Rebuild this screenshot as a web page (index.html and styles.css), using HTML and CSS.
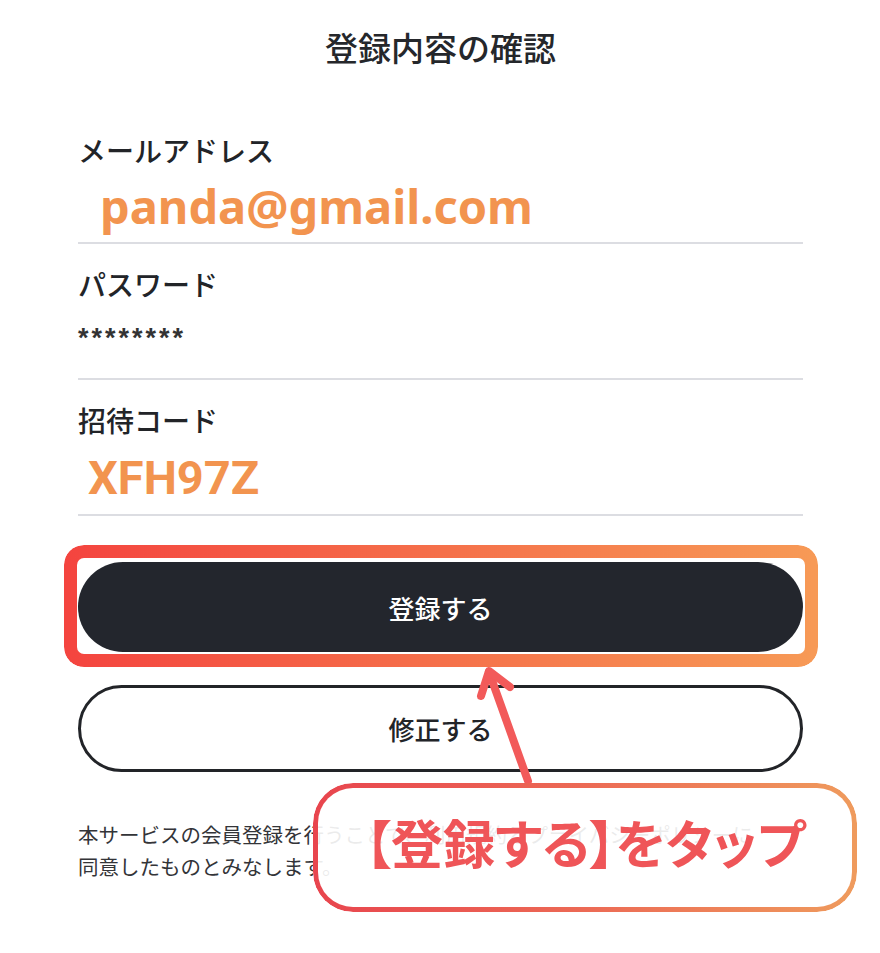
FILE: index.html
```html
<!DOCTYPE html>
<html lang="ja">
<head>
<meta charset="utf-8">
<title>登録内容の確認</title>
<link rel="stylesheet" href="styles.css">
</head>
<body>
<div class="screen">
  <h1 class="title">登録内容の確認</h1>
  <div class="fields">
    <div class="field">
      <div class="label">メールアドレス</div>
      <div class="value email">panda@gmail.com</div>
    </div>
    <div class="field">
      <div class="label">パスワード</div>
      <div class="value password">********</div>
    </div>
    <div class="field">
      <div class="label">招待コード</div>
      <div class="value code">XFH97Z</div>
    </div>
  </div>
  <div class="actions">
    <div class="primary-wrap">
      <button class="btn primary">登録する</button>
      <span class="highlight"></span>
    </div>
    <button class="btn secondary">修正する</button>
  </div>
  <p class="note">本サービスの会員登録を行うことで、利用規約とプライバシーポリシーに<br>同意したものとみなします。</p>
  <svg class="arrow" width="880" height="953" viewBox="0 0 880 953" aria-hidden="true">
    <g fill="none" stroke="#f25a5a" stroke-width="8" stroke-linecap="round" stroke-linejoin="round">
      <path d="M528 781 L489 672"/>
      <path d="M481 696 L489 671 L510 687"/>
    </g>
  </svg>
  <div class="callout">【登録する】をタップ</div>
</div>
</body>
</html>
```
FILE: styles.css
```css
* { box-sizing: border-box; }
html, body { margin: 0; padding: 0; background: #ffffff; }
body {
  font-family: "Noto Sans CJK JP", "Noto Sans", sans-serif;
  color: #222428;
}
.screen {
  position: relative;
  width: 880px;
  height: 953px;
  padding: 0 77px 0 78px;
  overflow: hidden;
}
.title {
  margin: 0;
  padding-top: 27px;
  line-height: 40px;
  font-size: 33px;
  font-weight: 500;
  text-align: center;
  color: #25272b;
}
.fields { margin-top: 43px; }
.field {
  padding-top: 20px;
  border-bottom: 2px solid #dcdde2;
}
.label {
  line-height: 40px;
  font-size: 28px;
  font-weight: 500;
  color: #222428;
}
.value { height: 72px; }
.email {
  padding-left: 22px;
  line-height: 72px;
  font-family: "Noto Sans", sans-serif;
  font-size: 47px;
  font-weight: 700;
  color: #f2944f;
}
.password {
  height: 74px;
  padding-top: 19px;
  line-height: 30px;
  font-family: "Liberation Sans", sans-serif;
  font-size: 27px;
  font-weight: 700;
  color: #333;
  letter-spacing: 3px;
}
.code {
  height: 74px;
  padding-left: 10px;
  line-height: 76px;
  font-family: Roboto, "Liberation Sans", sans-serif;
  font-size: 47px;
  font-weight: 700;
  color: #f2944f;
}
.actions {
  margin-top: 46px;
  display: flex;
  flex-direction: column;
  gap: 33px;
}
.primary-wrap { position: relative; }
.btn {
  display: block;
  width: 100%;
  border-radius: 999px;
  font-family: "Noto Sans CJK JP", sans-serif;
  font-size: 26px;
  font-weight: 500;
  cursor: pointer;
}
.primary {
  height: 90px;
  border: none;
  background: #23262d;
  color: #ffffff;
}
.secondary {
  height: 87px;
  border: 3px solid #222428;
  background: #ffffff;
  color: #222428;
}
.highlight {
  position: absolute;
  top: -17px;
  bottom: -15px;
  left: -14px;
  right: -15px;
  border-radius: 20px;
  padding: 13px;
  background: linear-gradient(90deg, #f4443f 0%, #f5704a 50%, #f79a56 100%);
  -webkit-mask: linear-gradient(#000 0 0) content-box, linear-gradient(#000 0 0);
  -webkit-mask-composite: xor;
  mask-composite: exclude;
  pointer-events: none;
}
.note {
  margin: 46px 0 0;
  font-size: 20.5px;
  line-height: 32px;
  color: #333438;
}
.arrow {
  position: absolute;
  left: 0;
  top: 0;
  pointer-events: none;
}
.callout {
  position: absolute;
  left: 313px;
  top: 783px;
  width: 544px;
  height: 129px;
  border-radius: 40px;
  background: rgba(255, 255, 255, 0.9);
  display: flex;
  align-items: center;
  justify-content: center;
  padding: 0 0 12px 0;
  font-size: 52px;
  font-weight: 700;
  color: #ef5558;
  font-feature-settings: "palt";
  letter-spacing: 0;
}
.callout::before {
  content: "";
  position: absolute;
  inset: 0;
  border-radius: inherit;
  padding: 5px;
  background: linear-gradient(90deg, #e8454e 0%, #ec6a55 50%, #ef9b5d 100%);
  -webkit-mask: linear-gradient(#000 0 0) content-box, linear-gradient(#000 0 0);
  -webkit-mask-composite: xor;
  mask-composite: exclude;
}
```
